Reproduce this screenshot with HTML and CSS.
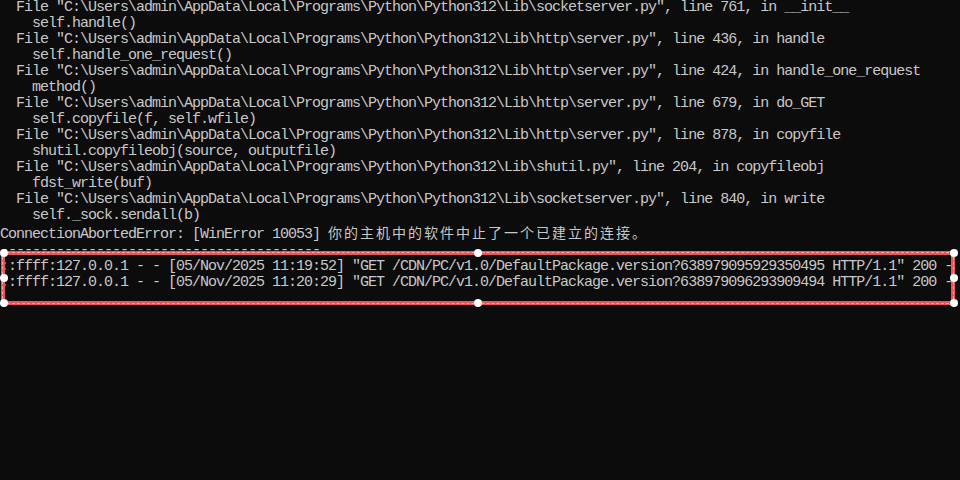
FILE: index.html
```html
<!DOCTYPE html>
<html lang="zh-CN">
<head>
  <meta charset="UTF-8">
  <meta name="viewport" content="width=device-width, initial-scale=1.0">
  <title>命令提示符</title>
  <link rel="stylesheet" href="styles.css">
</head>
<body>
  <div class="console">
<pre class="output">  File "C:\Users\admin\AppData\Local\Programs\Python\Python312\Lib\socketserver.py", line 761, in __init__
    self.handle()
  File "C:\Users\admin\AppData\Local\Programs\Python\Python312\Lib\http\server.py", line 436, in handle
    self.handle_one_request()
  File "C:\Users\admin\AppData\Local\Programs\Python\Python312\Lib\http\server.py", line 424, in handle_one_request
    method()
  File "C:\Users\admin\AppData\Local\Programs\Python\Python312\Lib\http\server.py", line 679, in do_GET
    self.copyfile(f, self.wfile)
  File "C:\Users\admin\AppData\Local\Programs\Python\Python312\Lib\http\server.py", line 878, in copyfile
    shutil.copyfileobj(source, outputfile)
  File "C:\Users\admin\AppData\Local\Programs\Python\Python312\Lib\shutil.py", line 204, in copyfileobj
    fdst_write(buf)
  File "C:\Users\admin\AppData\Local\Programs\Python\Python312\Lib\socketserver.py", line 840, in write
    self._sock.sendall(b)
ConnectionAbortedError: [WinError 10053] <span class="cjk">你的主机中的软件中止了一个已建立的连接。</span>
----------------------------------------
::ffff:127.0.0.1 - - [05/Nov/2025 11:19:52] "GET /CDN/PC/v1.0/DefaultPackage.version?638979095929350495 HTTP/1.1" 200 -
::ffff:127.0.0.1 - - [05/Nov/2025 11:20:29] "GET /CDN/PC/v1.0/DefaultPackage.version?638979096293909494 HTTP/1.1" 200 -
</pre>
    <!-- 截图标注的选框 -->
    <div class="selection">
      <span class="handle tl"></span>
      <span class="handle tm"></span>
      <span class="handle tr"></span>
      <span class="handle ml"></span>
      <span class="handle mr"></span>
      <span class="handle bl"></span>
      <span class="handle bm"></span>
      <span class="handle br"></span>
    </div>
  </div>
</body>
</html>
```

FILE: styles.css
```css
/* 通用样式 */
* {
  margin: 0;
  padding: 0;
  box-sizing: border-box;
}
html, body {
  height: 100%;
  background: #0c0c0c;
  overflow: hidden;
}

/* 控制台区域 */
.console {
  position: relative;
  height: 100%;
}
.console .output {
  white-space: pre;
  font: 15px/16px "Liberation Mono", "Noto Sans CJK SC", monospace;
  letter-spacing: -1px;
  color: #c8c8c8;
}
.console .output .cjk {
  font: 14px/16px "Noto Sans CJK SC", sans-serif;
  letter-spacing: 2px;
}

/* 红色选框 */
.selection {
  position: absolute;
  top: 251px;
  left: 1px;
  width: 954px;
  height: 54px;
  border: 4px solid #e8555c;
}
.selection::after {
  content: '';
  position: absolute;
  top: -3px;
  left: -3px;
  right: -3px;
  bottom: -3px;
  border: 1px dashed rgba(235, 200, 200, .75);
}
/* 拖动手柄 */
.selection .handle {
  position: absolute;
  z-index: 2;
  width: 8px;
  height: 8px;
  border-radius: 50%;
  background: #fff;
  transform: translate(-50%, -50%);
}
.selection .tl, .selection .tm, .selection .tr { top: -2px; }
.selection .ml, .selection .mr { top: 50%; }
.selection .bl, .selection .bm, .selection .br { top: calc(100% + 2px); }
.selection .tl, .selection .ml, .selection .bl { left: -1px; }
.selection .tm, .selection .bm { left: 50%; }
.selection .tr, .selection .mr, .selection .br { left: calc(100% + 3px); }
```
